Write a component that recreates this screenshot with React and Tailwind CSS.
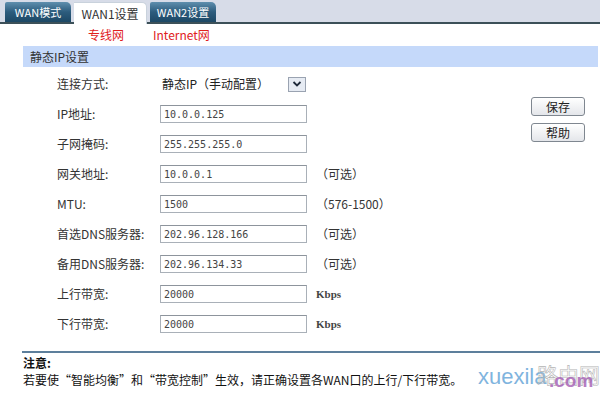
import React from "react";

const rows = [
  { label: "IP地址:", value: "10.0.0.125" },
  { label: "子网掩码:", value: "255.255.255.0" },
  { label: "网关地址:", value: "10.0.0.1", hint: "（可选）" },
  { label: "MTU:", value: "1500", hint: "（576-1500）" },
  { label: "首选DNS服务器:", value: "202.96.128.166", hint: "（可选）" },
  { label: "备用DNS服务器:", value: "202.96.134.33", hint: "（可选）" },
  { label: "上行带宽:", value: "20000", unit: "Kbps" },
  { label: "下行带宽:", value: "20000", unit: "Kbps" },
];

function Tab({ children, active }) {
  if (active) {
    return (
      <div className="relative z-10 -mb-[2px] h-[22px] w-[73px] rounded-tr-[5px] bg-white border-t border-r border-[#c9d2dc] flex items-center justify-center text-[12px] text-[#333]">
        {children}
      </div>
    );
  }
  return (
    <div className="h-[20px] w-[66px] rounded-tr-[5px] rounded-tl-[2px] bg-gradient-to-b from-[#5f8fae] via-[#2c5c7d] to-[#1d4865] flex items-center justify-center text-[11px] text-white">
      {children}
    </div>
  );
}

function Field({ value }) {
  return (
    <div className="w-[147px] h-[18px] border border-[#a9b0b8] border-t-[#8d949c] bg-white pl-[3px] flex items-center font-['DejaVu_Sans_Mono',monospace] text-[10px] text-[#444]">
      {value}
    </div>
  );
}

function Btn({ children }) {
  return (
    <button className="w-[54px] h-[19px] rounded-[3px] border border-[#7f8790] bg-gradient-to-b from-white to-[#e4e6ea] text-[12px] leading-none text-[#222]">
      {children}
    </button>
  );
}

export default function App() {
  return (
    <div className="relative w-[600px] h-[397px] overflow-hidden bg-white text-[12px] text-[#333] font-['Noto_Sans_CJK_SC','Liberation_Sans',sans-serif]">
      {/* tabs */}
      <div className="h-[24px] bg-[#d7dce8] border-b-2 border-[#3c5058] flex items-end gap-[3px] pl-[5px]">
        <Tab>WAN模式</Tab>
        <Tab active>WAN1设置</Tab>
        <Tab>WAN2设置</Tab>
      </div>

      <div className="h-[22px] flex items-center pl-[88px] text-[12px] text-[#e0201c]">
        <span className="w-[65px]">专线网</span>
        <span>Internet网</span>
      </div>

      <div className="ml-[23px] w-[575px] h-[21px] bg-[#c5d9fa] pl-[7px] flex items-center text-[12px] text-[#333]">
        静态IP设置
      </div>

      {/* form */}
      <div className="flex pt-[2px]">
        <div className="flex flex-col">
          <div className="h-[30px] flex items-center pl-[57px]">
            <span className="w-[103px]">连接方式:</span>
            <div className="w-[147px] h-[18px] flex items-center justify-between bg-white">
              <span className="pl-[2px] text-[12px] text-[#222]">静态IP（手动配置）</span>
              <span className="w-[18px] h-[15px] border border-[#9aa3b1] bg-[#e6ebf3] flex items-center justify-center mr-[1px]">
                <svg width="10" height="8" viewBox="0 0 10 8">
                  <path d="M1.5 2 L5 5.5 L8.5 2" fill="none" stroke="#1f2a3a" strokeWidth="1.8" />
                </svg>
              </span>
            </div>
          </div>
          {rows.map((r) => (
            <div key={r.label} className="h-[30px] flex items-center pl-[57px]">
              <span className="w-[103px]">{r.label}</span>
              <Field value={r.value} />
              {r.hint && <span className="ml-[9px] text-[12px] text-[#333]">{r.hint}</span>}
              {r.unit && (
                <span className="ml-[9px] text-[11px] font-bold font-['Liberation_Serif',serif] text-[#444]">
                  {r.unit}
                </span>
              )}
            </div>
          ))}
        </div>
        <div className="ml-auto mr-[15px] mt-[28px] flex flex-col gap-[7px]">
          <Btn>保存</Btn>
          <Btn>帮助</Btn>
        </div>
      </div>

      {/* note */}
      <div className="mt-[12px] ml-[22px] border-t-2 border-[#5d7f9c] pl-[1px] pt-[2px]">
        <div className="font-bold leading-[16px] text-[#111]">注意:</div>
        <div className="leading-[18px] text-[#111]">
          若要使“智能均衡”和“带宽控制”生效，请正确设置各WAN口的上行/下行带宽。
        </div>
      </div>

      {/* watermark */}
      <div className="absolute left-[478px] top-[366px] text-[22px] leading-none font-['Liberation_Sans',sans-serif] text-[#7fb4de]">
        xuexila
      </div>
      <div className="absolute left-[537px] top-[364px] text-[21px] leading-none text-transparent [-webkit-text-stroke:0.6px_#b4b4b4]">
        路由网
      </div>
      <div className="absolute left-[549px] top-[371px] text-[19px] leading-none font-bold font-['Liberation_Sans',sans-serif] text-[#a35bb3]/80">
        .com
      </div>
    </div>
  );
}
